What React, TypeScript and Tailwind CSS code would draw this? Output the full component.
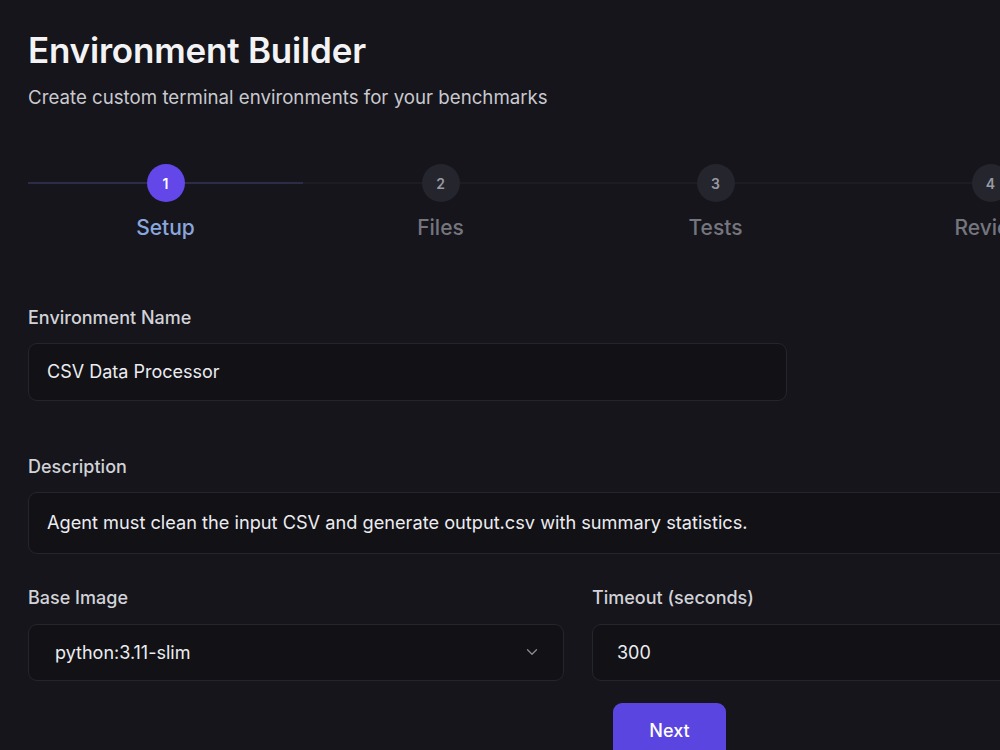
import { ChevronDown } from "lucide-react";

const steps = [
  { n: 1, label: "Setup" },
  { n: 2, label: "Files" },
  { n: 3, label: "Tests" },
  { n: 4, label: "Review" },
];

function Stepper({ current }: { current: number }) {
  return (
    <div className="flex w-[1100px] mt-[54px]">
      {steps.map((s) => {
        const active = s.n === current;
        return (
          <div key={s.n} className="flex-1 flex flex-col items-center">
            <div className="relative w-full h-[38px] flex items-center justify-center">
              <div
                className={
                  active
                    ? "absolute left-0 right-0 top-1/2 h-[2px] -translate-y-1/2 bg-[#2c2b48]"
                    : "absolute left-0 right-0 top-1/2 h-[2px] -translate-y-1/2 bg-[#1c1c23]"
                }
              />
              <div
                className={
                  active
                    ? "relative z-10 w-[38px] h-[38px] rounded-full bg-[#6447e8] text-white flex items-center justify-center text-[14px] font-semibold"
                    : "relative z-10 w-[38px] h-[38px] rounded-full bg-[#24252d] text-[#9a9aa3] flex items-center justify-center text-[14px] font-semibold"
                }
              >
                {s.n}
              </div>
            </div>
            <span
              className={
                active
                  ? "mt-[10px] text-[21px] font-medium text-[#8aa6dd]"
                  : "mt-[10px] text-[21px] font-medium text-[#75757e]"
              }
            >
              {s.label}
            </span>
          </div>
        );
      })}
    </div>
  );
}

export default function App() {
  return (
    <div
      className="w-[1000px] h-[750px] overflow-hidden bg-[#15151b] text-[#e6e6ea]"
      style={{ fontFamily: "Inter, 'Noto Sans', sans-serif" }}
    >
      <div className="w-[1128px] pl-7 pt-[29px]">
        <h1 className="text-[35px] leading-[42px] font-semibold tracking-[-0.2px] text-[#f3f3f5]">
          Environment Builder
        </h1>
        <p className="mt-[15px] text-[18.7px] leading-[24px] text-[#c9c9cf]">
          Create custom terminal environments for your benchmarks
        </p>

        <Stepper current={1} />

        <div className="mt-[62px]">
          <label className="block text-[18px] leading-[24px] font-medium text-[#d2d2d8]">
            Environment Name
          </label>
          <div className="mt-[13px] w-[759px] h-[58px] rounded-[9px] border border-[#25252d] bg-[#111116] flex items-center px-[18px] text-[18px] text-[#ececf0]">
            CSV Data Processor
          </div>
        </div>

        <div className="mt-[54px]">
          <label className="block text-[18px] leading-[24px] font-medium text-[#d2d2d8]">
            Description
          </label>
          <div className="mt-[13px] w-full h-[62px] rounded-[9px] border border-[#25252d] bg-[#111116] flex items-center px-[18px] text-[18.2px] text-[#ececf0]">
            Agent must clean the input CSV and generate output.csv with summary statistics.
          </div>
        </div>

        <div className="mt-[32px] grid grid-cols-2 gap-7">
          <div>
            <label className="block text-[18px] leading-[24px] font-medium text-[#d2d2d8]">
              Base Image
            </label>
            <div className="mt-[14px] h-[57px] rounded-[9px] border border-[#25252d] bg-[#111116] flex items-center justify-between pl-[26px] pr-[22px] text-[18px] text-[#ececf0]">
              <span>python:3.11-slim</span>
              <ChevronDown size={18} strokeWidth={1.75} className="text-[#8a8a93]" />
            </div>
          </div>
          <div>
            <label className="block text-[18px] leading-[24px] font-medium text-[#d2d2d8]">
              Timeout (seconds)
            </label>
            <div className="mt-[14px] h-[57px] rounded-[9px] border border-[#25252d] bg-[#111116] flex items-center px-[24px] text-[18px] text-[#ececf0]">
              300
            </div>
          </div>
        </div>

        <div className="mt-[22px] pl-[585px]">
          <button className="w-[113px] h-[56px] rounded-[9px] bg-[#5b45e0] text-white text-[18px] font-medium">
            Next
          </button>
        </div>
      </div>
    </div>
  );
}
